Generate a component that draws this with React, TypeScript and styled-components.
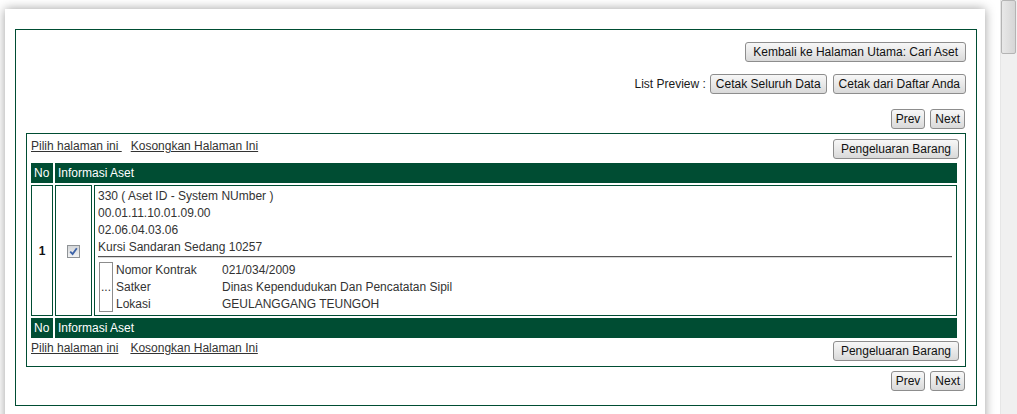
import React from "react";
import styled, { createGlobalStyle } from "styled-components";

const GREEN = "#004d33";

const GlobalStyle = createGlobalStyle`
  html, body {
    margin: 0;
    padding: 0;
    background: #ffffff;
    overflow: hidden;
  }
  body {
    font-family: "Liberation Sans", Arial, sans-serif;
    font-size: 12px;
    color: #333333;
  }
`;

const Viewport = styled.div`
  padding: 9px 0 0 5px;
  width: 1000px;
  box-sizing: border-box;
`;

const Card = styled.div`
  width: 980px;
  box-sizing: border-box;
  background: #ffffff;
  box-shadow: 0 0 10px rgba(0, 0, 0, 0.38);
  padding: 20px 8px 40px 10px;
`;

const Outer = styled.div`
  border: 1px solid ${GREEN};
  padding: 12px 10px 14px 10px;
  display: flex;
  flex-direction: column;
`;

const RightRow = styled.div<{ $gap?: number; $mt?: number; $pr?: number }>`
  display: flex;
  justify-content: flex-end;
  align-items: center;
  gap: ${(p) => p.$gap ?? 6}px;
  margin-top: ${(p) => p.$mt ?? 0}px;
  padding-right: ${(p) => p.$pr ?? 0}px;
`;

const Label = styled.span`
  color: #1a1a1a;
  margin-right: -2px;
`;

const Button = styled.button<{ $pad?: number; $min?: number }>`
  height: 20px;
  padding: 0 ${(p) => p.$pad ?? 5}px;
  min-width: ${(p) => p.$min ?? 0}px;
  font-family: "Liberation Sans", Arial, sans-serif;
  font-size: 12px;
  color: #111;
  background: linear-gradient(#f7f7f7, #e9e9e9 50%, #d9d9d9);
  border: 1px solid #8d8d8d;
  border-radius: 3px;
  cursor: pointer;
  line-height: 18px;
  white-space: nowrap;
`;

const Inner = styled.div`
  margin-top: 4px;
  border: 1px solid ${GREEN};
  padding: 5px 6px 5px 2px;
`;

const LinkBar = styled.div<{ $mt?: number }>`
  display: flex;
  justify-content: space-between;
  align-items: flex-start;
  padding-left: 2px;
  margin-top: ${(p) => p.$mt ?? 0}px;
`;

const Links = styled.div<{ $gap?: number }>`
  display: flex;
  gap: ${(p) => p.$gap ?? 9}px;
`;

const Link = styled.a`
  color: #333;
  text-decoration: underline;
  cursor: pointer;
`;

const Table = styled.table`
  width: 100%;
  border-collapse: separate;
  border-spacing: 2px;
  margin-top: 2px;
`;

const Th = styled.th<{ $w?: number }>`
  background: ${GREEN};
  color: #ffffff;
  font-weight: normal;
  text-align: left;
  height: 20px;
  padding: 0 3px;
  ${(p) => (p.$w ? `width: ${p.$w}px;` : "")}
  box-sizing: border-box;
`;

const Td = styled.td<{ $center?: boolean }>`
  border: 1px solid ${GREEN};
  vertical-align: ${(p) => (p.$center ? "middle" : "top")};
  text-align: ${(p) => (p.$center ? "center" : "left")};
  padding: ${(p) => (p.$center ? "0" : "2px 4px 2px 3px")};
  height: 131px;
  box-sizing: border-box;
`;

const Num = styled.span`
  font-weight: bold;
  color: #111;
`;

const Check = styled.span`
  display: inline-flex;
  width: 13px;
  height: 13px;
  box-sizing: border-box;
  border: 1px solid #8f9396;
  background: linear-gradient(#d4d6d8, #f2f3f4);
  align-items: center;
  justify-content: center;
  vertical-align: middle;
`;

const Line = styled.div`
  line-height: 17px;
`;

const Rule = styled.hr`
  margin: 0 0 4px 0;
  border: 0;
  border-top: 1px solid #555;
  border-bottom: 1px solid #d8d8d8;
  height: 0;
`;

const Detail = styled.div`
  display: grid;
  grid-template-columns: 14px 103px 1fr;
  column-gap: 3px;
  margin-left: 1px;
`;

const Dots = styled.div`
  grid-row: 1 / span 3;
  border: 1px solid #8c8c8c;
  display: flex;
  align-items: center;
  justify-content: flex-start;
  padding-left: 1px;
  line-height: 10px;
  height: 50px;
  box-sizing: border-box;
`;

const Cell = styled.div`
  line-height: 17px;
`;

const Scrollbar = styled.div`
  position: fixed;
  top: 0;
  right: 0;
  width: 17px;
  height: 100vh;
  background: #f0f0f0;
  border-left: 1px solid #e6e6e6;
  box-sizing: border-box;
`;

const Thumb = styled.div`
  margin: 0 1px 0 0;
  height: 54px;
  background: linear-gradient(90deg, #e8e8e8, #d6d6d6);
  border: 1px solid #b4b4b4;
  border-radius: 2px;
  box-sizing: border-box;
`;

const details: [string, string][] = [
  ["Nomor Kontrak", "021/034/2009"],
  ["Satker", "Dinas Kependudukan Dan Pencatatan Sipil"],
  ["Lokasi", "GEULANGGANG TEUNGOH"],
];

function Pager() {
  return (
    <>
      <Button $pad={4} $min={34}>Prev</Button>
      <Button $pad={4} $min={34}>Next</Button>
    </>
  );
}

export default function App() {
  return (
    <>
      <GlobalStyle />
      <Viewport>
        <Card>
          <Outer>
            <RightRow>
              <Button $pad={7}>Kembali ke Halaman Utama: Cari Aset</Button>
            </RightRow>
            <RightRow $mt={12}>
              <Label>List Preview :</Label>
              <Button>Cetak Seluruh Data</Button>
              <Button>Cetak dari Daftar Anda</Button>
            </RightRow>
            <RightRow $mt={15} $gap={5} $pr={1}>
              <Pager />
            </RightRow>
            <Inner>
              <LinkBar>
                <Links $gap={9}>
                  <Link>Pilih halaman ini&nbsp;</Link>
                  <Link>Kosongkan Halaman Ini</Link>
                </Links>
                <Button $pad={7}>Pengeluaran Barang</Button>
              </LinkBar>
              <Table>
                <thead>
                  <tr>
                    <Th $w={22}>No</Th>
                    <Th colSpan={2}>Informasi Aset</Th>
                  </tr>
                </thead>
                <tbody>
                  <tr>
                    <Td $center style={{ width: 22 }}>
                      <Num>1</Num>
                    </Td>
                    <Td $center style={{ width: 37 }}>
                      <Check>
                        <svg width="9" height="9" viewBox="0 0 9 9">
                          <path
                            d="M1.2 4.6 L3.6 7 L7.8 1.2"
                            fill="none"
                            stroke="#3d63a8"
                            strokeWidth="1.8"
                          />
                        </svg>
                      </Check>
                    </Td>
                    <Td>
                      <Line>330 ( Aset ID - System NUmber )</Line>
                      <Line>00.01.11.10.01.09.00</Line>
                      <Line>02.06.04.03.06</Line>
                      <Line>Kursi Sandaran Sedang 10257</Line>
                      <Rule />
                      <Detail>
                        <Dots>...</Dots>
                        {details.map(([k, v]) => (
                          <React.Fragment key={k}>
                            <Cell>{k}</Cell>
                            <Cell>{v}</Cell>
                          </React.Fragment>
                        ))}
                      </Detail>
                    </Td>
                  </tr>
                </tbody>
                <tfoot>
                  <tr>
                    <Th>No</Th>
                    <Th colSpan={2}>Informasi Aset</Th>
                  </tr>
                </tfoot>
              </Table>
              <LinkBar $mt={1}>
                <Links $gap={12}>
                  <Link>Pilih halaman ini</Link>
                  <Link>Kosongkan Halaman Ini</Link>
                </Links>
                <Button $pad={7}>Pengeluaran Barang</Button>
              </LinkBar>
            </Inner>
            <RightRow $mt={4} $gap={5} $pr={1}>
              <Pager />
            </RightRow>
          </Outer>
        </Card>
      </Viewport>
      <Scrollbar>
        <Thumb />
      </Scrollbar>
    </>
  );
}
